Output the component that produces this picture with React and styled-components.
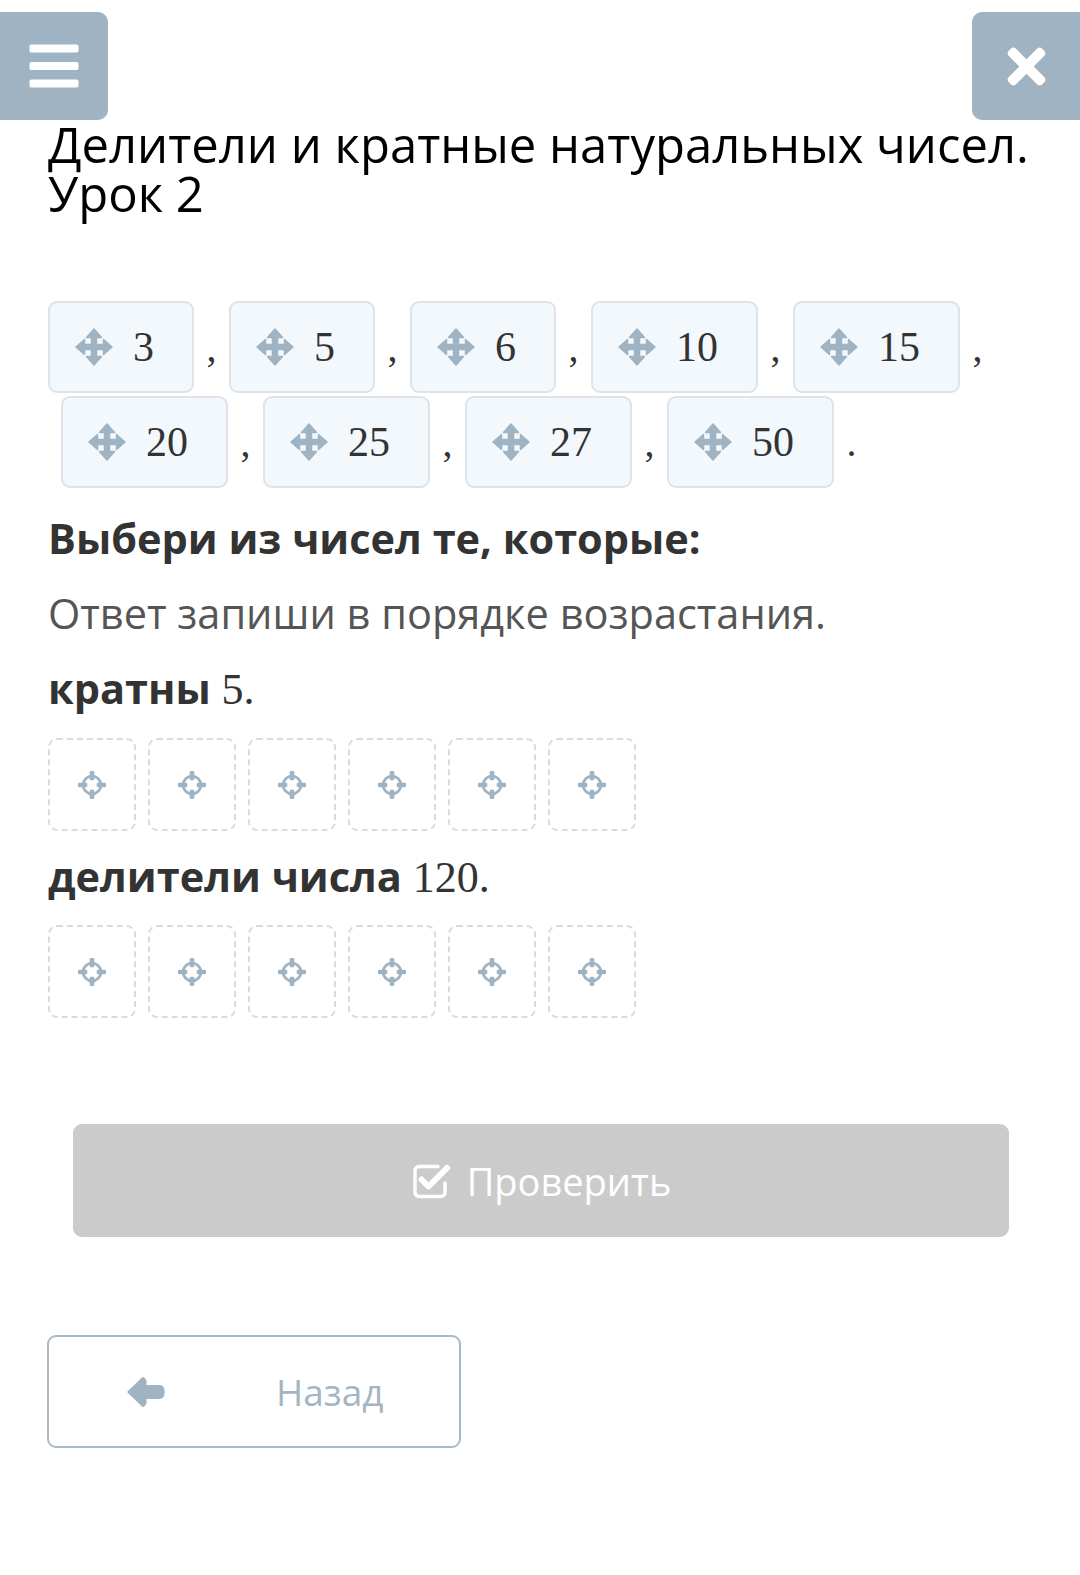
import React from 'react';
import styled, { createGlobalStyle } from 'styled-components';
import { FaBars, FaTimes } from 'react-icons/fa';

const GlobalStyle = createGlobalStyle`
  body {
    margin: 0;
    background: #ffffff;
    font-family: "Open Sans", "Noto Sans", sans-serif;
  }
`;

const Page = styled.div`
  width: 1080px;
  min-height: 1575px;
  background: #fff;
`;

const TopBar = styled.div`
  display: flex;
  justify-content: space-between;
  padding-top: 12px;
`;

const CornerButton = styled.button`
  width: 108px;
  height: 108px;
  border: none;
  background: #9fb3c2;
  color: #fff;
  display: flex;
  align-items: center;
  justify-content: center;
  padding: 0;
  border-radius: ${p => (p.side === 'left' ? '0 10px 10px 0' : '10px 0 0 10px')};
`;

const Content = styled.div`
  padding: 0 48px;
`;

const Title = styled.h1`
  margin: 0;
  font-size: 49px;
  line-height: 49px;
  font-weight: 400;
  color: #000;
`;

const Chips = styled.div`
  margin-top: 83px;
  display: flex;
  flex-direction: column;
  gap: 3px;
`;

const ChipRow = styled.div`
  display: flex;
  align-items: center;
  padding-left: ${p => p.indent || 0}px;
`;

const Chip = styled.div`
  box-sizing: border-box;
  height: 92px;
  display: flex;
  align-items: center;
  gap: 20px;
  padding: 0 38px 0 25px;
  background: #f3f8fc;
  border: 2px solid #dde3e8;
  border-radius: 9px;
`;

const Num = styled.span`
  font-family: "Liberation Serif", "DejaVu Serif", serif;
  font-size: 42px;
  line-height: 1;
  color: #333;
`;

const Sep = styled.span`
  width: 35px;
  text-align: center;
  font-family: "Liberation Serif", "DejaVu Serif", serif;
  font-size: 40px;
  line-height: 40px;
  padding-top: 2px;
  color: #333;
`;

const Question = styled.div`
  margin-top: 25px;
  display: flex;
  flex-direction: column;
  gap: 25px;
`;

const Text = styled.p`
  margin: ${p => p.shift || 0}px 0 0;
  font-size: 41.5px;
  line-height: 50px;
  font-weight: ${p => (p.bold ? 700 : 400)};
  color: ${p => (p.bold ? '#333' : '#555')};
`;

const Math = styled.span`
  font-family: "Liberation Serif", "DejaVu Serif", serif;
  font-weight: 400;
  font-size: 44px;
`;

const Slots = styled.div`
  display: flex;
  gap: 12px;
  margin: ${p => p.top}px 0 -3px;
`;

const Slot = styled.div`
  box-sizing: border-box;
  width: 88px;
  height: 93px;
  border: 2px dashed #d6dce1;
  border-radius: 9px;
  display: flex;
  align-items: center;
  justify-content: center;
`;

const Footer = styled.div`
  padding: 109px 0 120px;
`;

const CheckButton = styled.button`
  display: flex;
  align-items: center;
  justify-content: center;
  gap: 16px;
  width: 936px;
  height: 113px;
  margin: 0 0 0 73px;
  border: none;
  border-radius: 9px;
  background: #cbcbcb;
  color: #fff;
  font-family: "Open Sans", "Noto Sans", sans-serif;
  font-size: 38px;
`;

const BackButton = styled.button`
  box-sizing: border-box;
  display: flex;
  align-items: center;
  gap: 111px;
  width: 414px;
  height: 113px;
  margin: 98px 0 0 47px;
  padding: 0 0 0 78px;
  background: #fff;
  border: 2px solid #a9b9c5;
  border-radius: 9px;
  color: #a4b6c3;
  font-family: "Open Sans", "Noto Sans", sans-serif;
  font-size: 37px;
`;

const ICON = '#9fb3c2';

const MoveIcon = () => (
  <svg width="38" height="38" viewBox="0 0 38 38">
    <g fill={ICON} stroke={ICON} strokeWidth="1.5" strokeLinejoin="round">
      <rect x="16.5" y="8" width="5" height="22" />
      <rect x="8" y="16.5" width="22" height="5" />
      <polygon points="19,1 26.5,9.5 11.5,9.5" />
      <polygon points="19,37 26.5,28.5 11.5,28.5" />
      <polygon points="1,19 9.5,11.5 9.5,26.5" />
      <polygon points="37,19 28.5,11.5 28.5,26.5" />
    </g>
  </svg>
);

const Crosshair = () => (
  <svg width="30" height="30" viewBox="0 0 32 32">
    <circle cx="16" cy="16" r="9.5" fill="none" stroke={ICON} strokeWidth="3" />
    <rect x="13.5" y="1" width="5" height="10" rx="1.5" fill={ICON} />
    <rect x="13.5" y="21" width="5" height="10" rx="1.5" fill={ICON} />
    <rect x="1" y="13.5" width="10" height="5" rx="1.5" fill={ICON} />
    <rect x="21" y="13.5" width="10" height="5" rx="1.5" fill={ICON} />
  </svg>
);

const CheckSquare = () => (
  <svg width="40" height="38" viewBox="0 0 40 38">
    <path
      d="M27 4.5H8a4 4 0 0 0-4 4v22a4 4 0 0 0 4 4h22a4 4 0 0 0 4-4V21"
      fill="none"
      stroke="#fff"
      strokeWidth="3.5"
      strokeLinecap="round"
    />
    <path
      d="M10.5 17.5l7 7L36 6"
      fill="none"
      stroke="#fff"
      strokeWidth="6"
      strokeLinecap="round"
      strokeLinejoin="round"
    />
  </svg>
);

const ArrowLeft = () => (
  <svg width="38" height="32" viewBox="0 0 38 32">
    <g fill={ICON} stroke={ICON} strokeWidth="3" strokeLinejoin="round" strokeLinecap="round">
      <polygon points="2,16 16,2.5 18,4.5 18,27.5 16,29.5" />
      <rect x="15" y="10.5" width="21" height="11" rx="3.5" />
    </g>
  </svg>
);

const rows = [
  { indent: 0, items: [['3', ','], ['5', ','], ['6', ','], ['10', ','], ['15', ',']] },
  { indent: 13, items: [['20', ','], ['25', ','], ['27', ','], ['50', '.']] },
];

const SlotRow = ({ top }) => (
  <Slots top={top}>
    {[0, 1, 2, 3, 4, 5].map(i => (
      <Slot key={i}>
        <Crosshair />
      </Slot>
    ))}
  </Slots>
);

export default function App() {
  return (
    <Page>
      <GlobalStyle />
      <TopBar>
        <CornerButton side="left">
          <FaBars size={56} />
        </CornerButton>
        <CornerButton side="right">
          <FaTimes size={55} />
        </CornerButton>
      </TopBar>

      <Content>
        <Title>Делители и кратные натуральных чисел. Урок 2</Title>

        <Chips>
          {rows.map((row, r) => (
            <ChipRow key={r} indent={row.indent}>
              {row.items.map(([n, sep]) => (
                <React.Fragment key={n}>
                  <Chip>
                    <MoveIcon />
                    <Num>{n}</Num>
                  </Chip>
                  <Sep>{sep}</Sep>
                </React.Fragment>
              ))}
            </ChipRow>
          ))}
        </Chips>

        <Question>
          <Text bold>Выбери из чисел те, которые:</Text>
          <Text>Ответ запиши в порядке возрастания.</Text>
          <Text bold>кратны <Math>5.</Math></Text>
          <SlotRow top={-2} />
          <Text bold shift={-2}>делители числа <Math>120.</Math></Text>
          <SlotRow top={-3} />
        </Question>
      </Content>

      <Footer>
        <CheckButton>
          <CheckSquare />
          Проверить
        </CheckButton>
        <BackButton>
          <ArrowLeft />
          Назад
        </BackButton>
      </Footer>
    </Page>
  );
}
